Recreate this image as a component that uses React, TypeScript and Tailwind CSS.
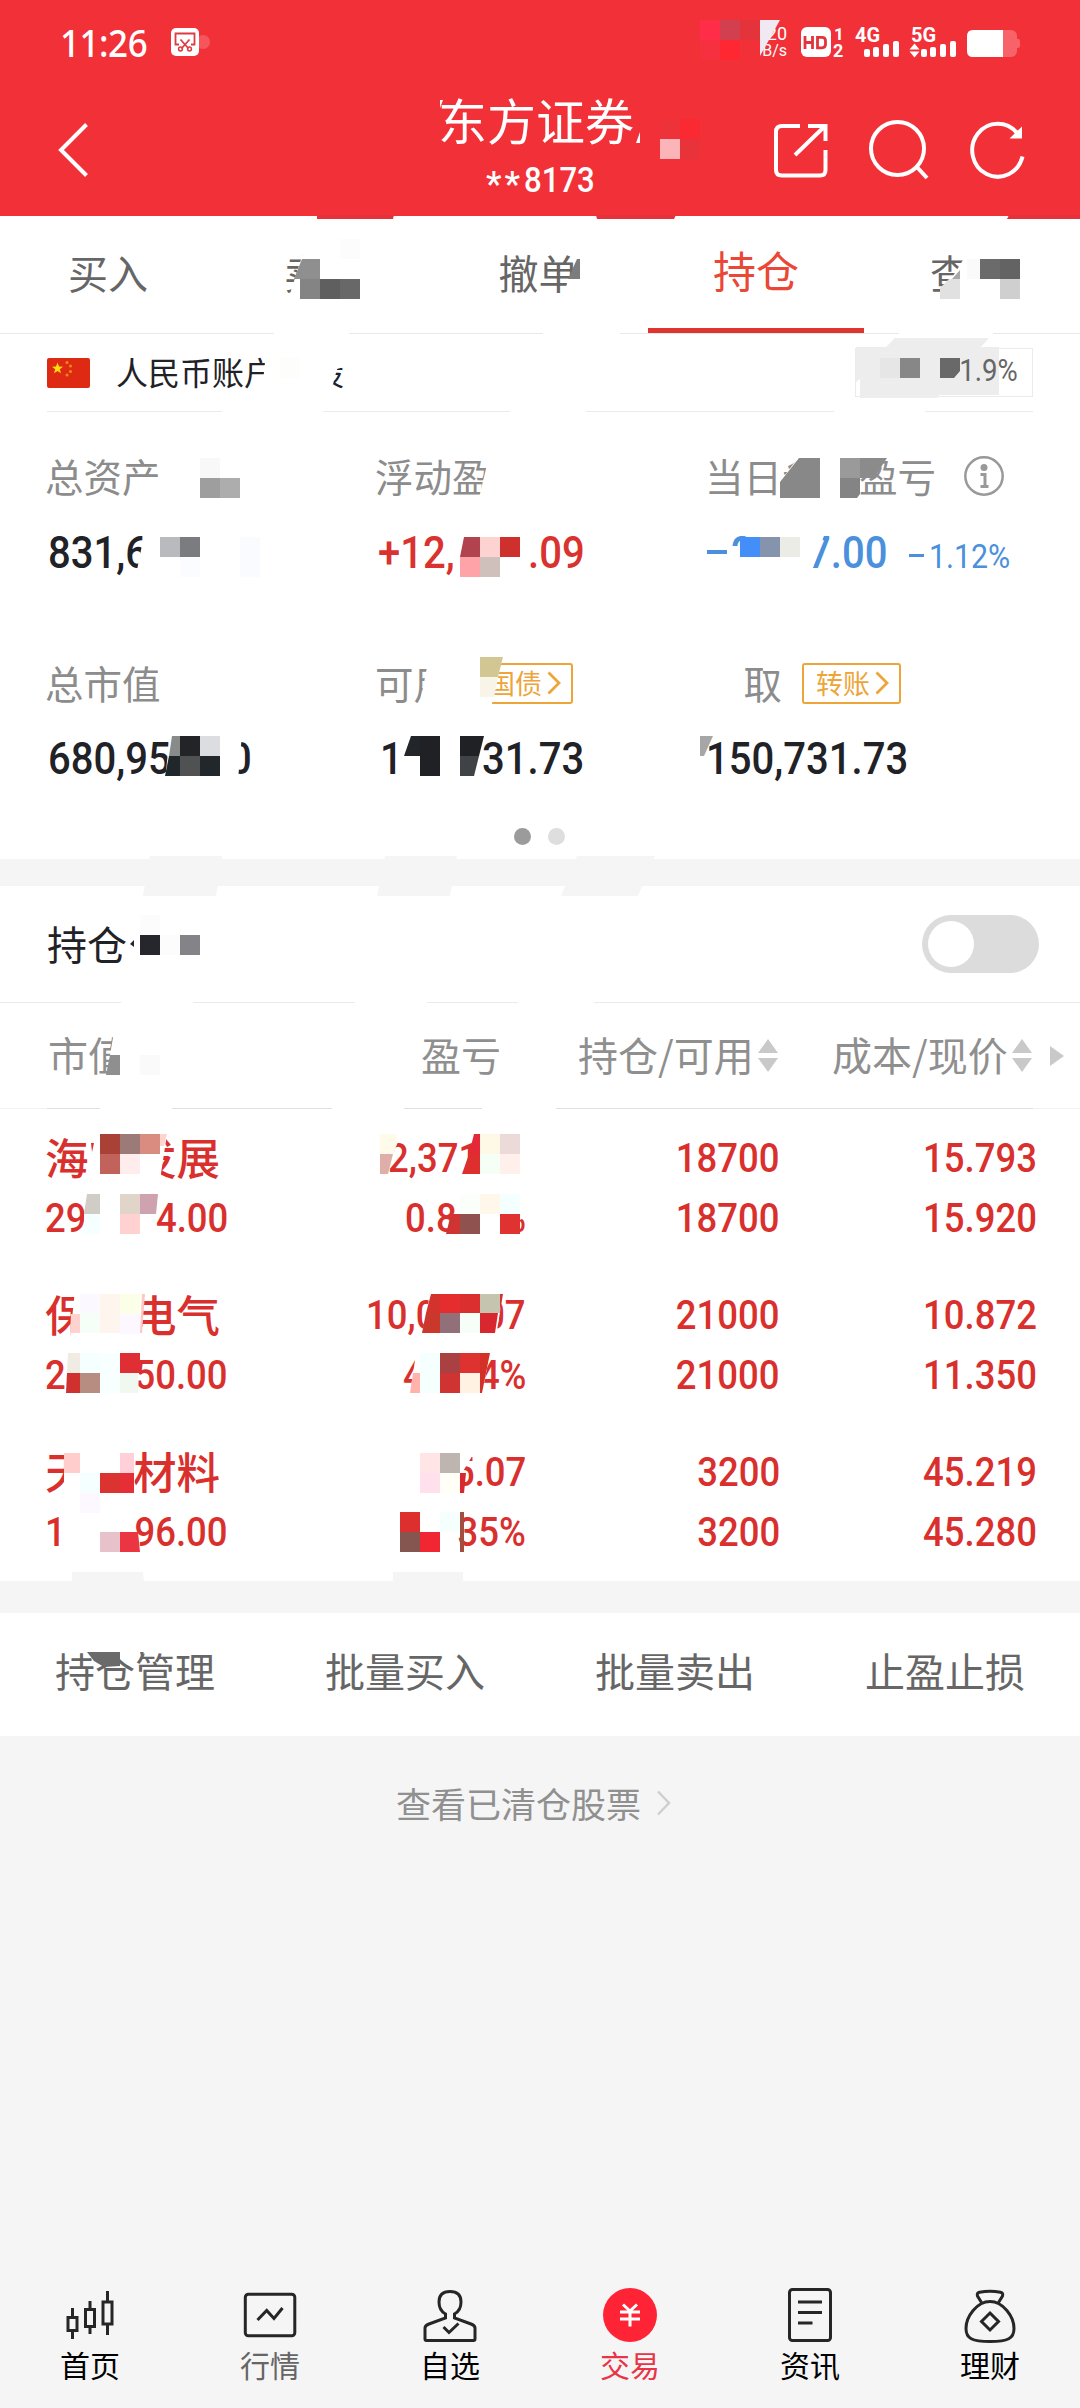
import type { ReactNode } from 'react';
import clsx from 'clsx';

type Shape = [points: string, fill: string];
type Block = [x: number, y: number, w: number, h: number, fill: string];

const tabs = ['买入', '卖', '撤单', '持仓', '查'];
const actions = ['持仓管理', '批量买入', '批量卖出', '止盈止损'];

const holdings = [
  { name: ['海', '发展'], value: ['29', '4.00'], profit: ['2,371', ''], rate: ['0.8', '%'], volume: '18700', cost: '15.793', price: '15.920' },
  { name: ['保', '电气'], value: ['2', '50.00'], profit: ['10,0', '07'], rate: ['4', '4%'], volume: '21000', cost: '10.872', price: '11.350' },
  { name: ['天', '材料'], value: ['1', '96.00'], profit: ['', '5.07'], rate: ['', '35%'], volume: '3200', cost: '45.219', price: '45.280' },
];

// widths of the partly hidden profit / rate texts, right aligned to the column
const profitWidths = ['w-[138px]', 'w-[160px]', 'w-[159px]'];
const rateWidths = ['w-[121px]', 'w-[123px]', 'w-[123px]'];

// white covers that hide parts of the private texts
const covers: Shape[] = [
  ['304,250 370,250 370,300 288,300', '#fff'],
  ['568,279 582,279 582,300 563,300', '#fff'],
  ['968,252 1050,252 1050,300 938,300', '#fff'],
  ['274,332 349,332 349,336 274,336', '#fff'],
  ['543,332 620,332 620,336 543,336', '#fff'],
  ['899,332 993,332 993,336 899,336', '#fff'],
  ['222,409 323,409 323,413 222,413', '#fff'],
  ['510,409 586,409 586,413 510,413', '#fff'],
  ['834,409 925,409 925,413 834,413', '#fff'],
  ['266,352 290,352 290,392 262,392', '#fff'],
  ['308,352 344,352 344,367 337,369 331,392 308,392', '#fff'],
  ['490,452 500,452 500,502 478,502', '#fff'],
  ['799,456 840,456 840,500 780,500 780,482', '#fff'],
  ['145,530 160,530 160,575 136,575', '#fff'],
  ['748,530 770,530 770,575 728,575 728,557 740,555', '#fff'],
  ['805,530 826,530 811,573 805,573', '#fff'],
  ['428,662 450,662 450,708 419,708', '#fff'],
  ['455,660 502,660 491,708 455,708', '#fff'],
  ['700,662 745,662 741,706 700,706', '#fff'],
  ['170,734 242,734 238,780 165,780', '#fff'],
  ['114,1032 132,1032 132,1078 106,1078', '#fff'],
  ['121,1001 193,1001 193,1004 121,1004', '#fff'],
  ['355,1001 427,1001 427,1004 355,1004', '#fff'],
  ['518,1001 594,1001 594,1004 518,1004', '#fff'],
  ['100,1107 172,1107 172,1110 100,1110', '#fff'],
  ['332,1107 404,1107 404,1110 332,1110', '#fff'],
  ['482,1107 556,1107 556,1110 482,1110', '#fff'],
  ['92,1134 167,1134 160,1180 90,1180', '#fff'],
  ['87,1194 158,1194 153,1238 84,1238', '#fff'],
  ['502,1194 530,1194 530,1214 520,1220 520,1238 502,1238', '#fff'],
  ['75,1290 145,1290 140,1338 70,1338', '#fff'],
  ['67,1350 140,1350 138,1394 65,1394', '#fff'],
  ['430,1294 503,1294 496,1336 422,1336', '#fff'],
  ['416,1353 490,1353 482,1394 410,1394', '#fff'],
  ['64,1448 136,1448 134,1496 64,1496', '#fff'],
  ['440,1453 474,1453 462,1473 460,1493 440,1493', '#fff'],
];

const patches: Shape[] = [
  // header edge
  ['317,215 394,215 393,219 317,219', '#e5323a'],
  ['596,215 676,215 674,219 597,219', '#e5323a'],
  ['1009,215 1080,215 1080,219 1007,219', '#e5323a'],
  // separator bands
  ['150,856 222,856 222,859 216,896 143,896', '#f5f5f5'],
  ['385,856 457,856 450,896 377,896', '#f5f5f5'],
  ['577,856 655,856 638,896 561,896', '#f5f5f5'],
  ['72,1572 143,1572 144,1582 72,1582', '#f5f5f5'],
  ['393,1572 463,1572 463,1582 393,1582', '#f5f5f5'],
  // status bar and title
  ['760,20 780,20 760,56', '#f1e9f2'],
  ['440,100 443,100 440,108', '#fff'],
  ['640,132 640,143 636,143', '#fff'],
  // tabs
  ['302,259 320,259 320,279 294,279', '#8f8f8f'],
  ['577,259 580,259 580,279 568,279', '#7c7c7c'],
  ['960,270 960,279 952,279', '#a8a8a8'],
  ['940,288 949,279 960,279 960,299 940,299', '#e1e1e1'],
  // account ratio badge
  ['856,347 886,347 895,338 989,338 981,347 999,347 999,395 939,395 937,398 860,398 860,379 856,382', '#ededed'],
  ['940,358 960,358 960,371 954,378 940,378', '#696969'],
  // assets
  ['799,458 820,458 820,498 780,498 780,482', '#888888'],
  ['860,458 887,458 874,478 860,478', '#8b8b8b'],
  ['840,478 860,478 860,494 857,498 840,498', '#848484'],
  ['464,537 480,537 480,557 460,557', '#b0434d'],
  ['480,657 503,657 498,677 480,677', '#d2c692'],
  ['480,677 498,677 494,697 480,697', '#f8f5e8'],
  ['172,736 180,736 180,756 169,756', '#888b89'],
  ['169,756 180,756 180,776 165,776', '#1f272b'],
  ['411,736 420,736 420,756 404,756', '#22262b'],
  ['460,736 484,736 479,756 460,756', '#1f2124'],
  ['460,756 479,756 474,776 460,776', '#3f4345'],
  ['700,736 713,736 704,756 700,756', '#a6a6a6'],
  // holdings
  ['134,940 130,944 134,947', '#26272d'],
  ['110,1055 120,1055 120,1075 106,1075', '#8f8f8f'],
  ['160,1134 167,1134 164,1146 160,1146', '#fdd5ce'],
  ['91,1143 94,1143 92,1152', '#d9302e'],
  ['87,1194 100,1194 100,1214 84,1214', '#cfcdc5'],
  ['140,1194 158,1194 156,1214 140,1214', '#cfa2b0'],
  ['380,1134 396,1134 398,1142 393,1154 380,1154', '#fffbeb'],
  ['380,1154 393,1154 388,1174 380,1174', '#e0aea8'],
  ['474,1134 480,1134 480,1154 469,1154', '#e42837'],
  ['469,1154 480,1154 480,1174 462,1174', '#dd302e'],
  ['451,1214 460,1214 460,1234 446,1234', '#cf3432'],
  ['142,1294 145,1294 142,1333 140,1333', '#fdc8c2'],
  ['71,1314 80,1314 80,1333 70,1333', '#fdd2cf'],
  ['68,1353 80,1353 80,1373 67,1373', '#f0ece4'],
  ['67,1373 80,1373 80,1393 66,1393', '#cf322e'],
  ['431,1294 440,1294 440,1313 426,1313', '#d4322c'],
  ['426,1313 440,1313 440,1333 422,1333', '#ca382c'],
  ['500,1294 503,1294 500,1312', '#d4322c'],
  ['480,1313 498,1313 495,1333 480,1333', '#d9272f'],
  ['480,1353 490,1353 482,1393 480,1393', '#d33028'],
  ['413,1373 420,1373 420,1393 410,1393', '#ffb3ab'],
  ['460,1473 466,1473 464,1493 460,1493', '#d9272f'],
  ['120,1532 138,1532 140,1552 120,1552', '#eb3542'],
  ['87,1652 120,1652 120,1666 104,1667 94,1661', '#6a6a6a'],
  ['140,1652 144,1652 141,1656', '#6a6a6a'],
];

const blocks: Block[] = [
  [700, 20, 20, 20, '#ff2d48'], [720, 20, 20, 20, '#d24050'], [740, 20, 20, 20, '#e5333b'],
  [700, 40, 20, 20, '#f73040'], [720, 40, 20, 20, '#ff2832'],
  [660, 119, 20, 20, '#ee323a'], [680, 119, 20, 20, '#fb2a32'], [660, 139, 20, 20, '#fbb4b8'], [680, 139, 20, 20, '#e8333b'],
  [340, 239, 20, 20, '#fcfcfc'], [300, 279, 20, 20, '#848484'], [320, 279, 20, 20, '#5f5f5f'], [340, 279, 20, 20, '#686868'],
  [967, 259, 13, 20, '#fafafa'], [980, 259, 20, 20, '#6b6b6b'], [1000, 259, 20, 20, '#636363'], [1000, 279, 20, 20, '#cfcfcf'],
  [280, 358, 20, 20, '#fdfdfc'], [880, 358, 20, 20, '#e6e6e6'], [900, 358, 20, 20, '#878787'],
  [200, 458, 20, 20, '#f8f8f8'], [200, 478, 20, 20, '#9e9e9e'], [220, 478, 20, 20, '#adadad'], [840, 458, 20, 20, '#9a9a9a'],
  [160, 537, 20, 20, '#b8babd'], [180, 537, 20, 20, '#7b7c80'], [180, 557, 20, 20, '#fbfcff'], [240, 537, 20, 40, '#fafbff'],
  [480, 537, 20, 20, '#fdd3d2'], [500, 537, 20, 20, '#ce302e'], [460, 557, 20, 20, '#fea4a8'], [480, 557, 20, 20, '#cfc0bc'],
  [740, 537, 20, 20, '#438ef8'], [760, 537, 20, 20, '#8594ac'], [780, 537, 20, 20, '#ecece6'],
  [180, 736, 20, 20, '#222428'], [200, 736, 20, 20, '#dcdde0'], [180, 756, 20, 20, '#505153'], [200, 756, 20, 20, '#22272b'],
  [420, 736, 20, 40, '#1f2124'],
  [140, 915, 20, 20, '#fcfcfc'], [140, 935, 20, 20, '#26272d'], [160, 935, 20, 20, '#fcfcfc'], [180, 935, 20, 20, '#848387'],
  [140, 1055, 20, 20, '#fafafa'],
  [100, 1134, 20, 20, '#aa4137'], [120, 1134, 20, 20, '#9b7a78'], [140, 1134, 20, 20, '#d98c7f'],
  [100, 1154, 20, 20, '#c1635b'], [120, 1154, 20, 20, '#ffecec'],
  [120, 1194, 20, 20, '#e1d4c8'], [84, 1214, 16, 20, '#f5ffff'], [120, 1214, 20, 20, '#ffd2d1'],
  [480, 1134, 20, 20, '#fef9e6'], [500, 1134, 20, 20, '#ecdad8'], [480, 1154, 20, 20, '#f5fff5'], [500, 1154, 20, 20, '#fff0eb'],
  [460, 1194, 20, 20, '#fbfffa'], [480, 1194, 20, 20, '#fff8ea'], [500, 1194, 20, 20, '#f4ffff'],
  [460, 1214, 20, 20, '#90524e'], [500, 1214, 20, 20, '#e03230'],
  [80, 1294, 20, 19, '#fcf8ff'], [100, 1294, 20, 39, '#fff5ef'], [120, 1294, 20, 20, '#fbffe8'], [80, 1313, 20, 20, '#f5fff8'], [120, 1314, 20, 20, '#fdf8ff'],
  [80, 1353, 20, 20, '#f5ffff'], [120, 1353, 20, 20, '#df2f35'], [80, 1373, 20, 20, '#b68d80'], [100, 1353, 20, 40, '#f7ffff'], [120, 1373, 18, 20, '#f0f8f0'],
  [440, 1294, 20, 19, '#e52d2f'], [460, 1294, 20, 19, '#db2e2e'], [480, 1294, 20, 19, '#c5c4af'], [440, 1313, 20, 20, '#917079'], [460, 1313, 20, 20, '#f5fff8'],
  [420, 1353, 20, 40, '#f5fffd'], [440, 1353, 20, 20, '#a94042'], [460, 1353, 20, 20, '#de3231'], [440, 1373, 20, 20, '#d03432'], [460, 1373, 20, 20, '#fff2e2'],
  [64, 1453, 16, 20, '#ffcdcb'], [120, 1453, 14, 20, '#ffd0d8'], [100, 1473, 20, 20, '#da3330'], [120, 1473, 14, 20, '#e62e36'], [80, 1473, 20, 20, '#f5ffff'], [80, 1493, 20, 20, '#fdf8ff'],
  [100, 1532, 20, 20, '#e7c2cb'],
  [420, 1453, 20, 20, '#ffe5e5'], [440, 1453, 20, 20, '#beb4b0'], [420, 1473, 20, 20, '#ffe0ec'], [440, 1473, 20, 20, '#fffff8'],
  [400, 1512, 20, 20, '#dd2f2e'], [400, 1532, 20, 20, '#85554f'], [420, 1532, 20, 20, '#f02633'], [440, 1512, 20, 20, '#f5fffd'], [460, 1512, 4, 40, '#a34c40'],
];

function PrivacyMosaic() {
  return (
    <svg className="absolute inset-0 z-10 pointer-events-none" width="1080" height="2408" viewBox="0 0 1080 2408">
      {covers.map(([points, fill]) => <polygon key={points} points={points} fill={fill} />)}
      {patches.map(([points, fill]) => <polygon key={points} points={points} fill={fill} />)}
      {blocks.map(([x, y, w, h, fill]) => (
        <rect key={`${x}-${y}`} x={x} y={y} width={w} height={h} fill={fill} shapeRendering="crispEdges" />
      ))}
    </svg>
  );
}

// Narrow digits
function Num({ children, right, className }: { children: ReactNode; right?: boolean; className?: string }) {
  return (
    <span className={clsx('inline-block scale-x-89 whitespace-pre', right ? 'origin-right' : 'origin-left', className)}>
      {children}
    </span>
  );
}

function StatusBar() {
  return (
    <div className="flex h-[84px] items-center text-white">
      <span className="ml-[60px] w-[111px] text-[38px] leading-none font-['Noto_Sans'] font-medium tracking-[-0.5px] scale-x-92 origin-left">11:26</span>
      <svg width="40" height="28" viewBox="0 0 40 28">
        <circle cx="32" cy="14" r="7" fill="#f5555b" />
        <rect width="28" height="28" rx="5" fill="#fff" />
        <path d="M8 16.5H4.500V5.500h19v11H20M9.500 11.500l8 9M18.500 11.500l-8 9" fill="none" stroke="#dc3c42" strokeWidth="1.800" />
        <circle cx="9.500" cy="21" r="1.900" fill="none" stroke="#dc3c42" strokeWidth="1.500" />
        <circle cx="18.500" cy="21" r="1.900" fill="none" stroke="#dc3c42" strokeWidth="1.500" />
      </svg>
      <div className="ml-[549px] w-[27px] flex flex-col items-end font-[Roboto] text-[18px] leading-[18px]">
        <span>20</span>
        <span className="text-[16px] leading-[16px]">B/s</span>
      </div>
      <svg className="ml-[14px]" width="220" height="60" viewBox="801 12 220 60" fontFamily="Roboto" fill="#fff">
        <rect x="801" y="27" width="30" height="30" rx="6" />
        <path d="M805 36v13M812.500 36v13M805 42.500h7.500M817.500 37.300h4.500q3.500 0 3.500 3.500v3.500q0 3.500-3.500 3.500h-4.500z" fill="none" stroke="#e0353b" strokeWidth="2.800" />
        <text x="834" y="40" fontSize="17" fontWeight="700">1</text>
        <text x="833" y="57" fontSize="18" fontWeight="700">2</text>
        <text x="855" y="42" fontSize="20" fontWeight="700">4G</text>
        <text x="911" y="42" fontSize="20" fontWeight="700">5G</text>
        {[864, 873, 883, 893].map((x, i) => <rect key={x} x={x} y={[49, 47, 44, 41][i]} width="6" height={[8, 10, 13, 16][i]} rx="2" />)}
        {[921, 930, 940, 950].map((x, i) => <rect key={x} x={x} y={[49, 47, 44, 41][i]} width="6" height={[8, 10, 13, 16][i]} rx="2" />)}
        <path d="M914.500 43.500l5 6h-10zM914.500 57.500l5-6h-10z" />
        <rect x="967" y="30" width="50" height="27" rx="6" fill="#f8636a" />
        <rect x="1015" y="39" width="5" height="9" rx="2" fill="#f8636a" />
        <path d="M1003 30h-30q-6 0-6 6v15q0 6 6 6h30z" />
      </svg>
    </div>
  );
}

function Header() {
  return (
    <header className="h-[216px] bg-[#f23037] text-white">
      <StatusBar />
      <div className="flex h-[132px] items-start">
        <svg className="mt-[38px] ml-[56px]" width="34" height="56" viewBox="0 0 34 56" fill="none" stroke="#fff" strokeWidth="4">
          <path d="M30.500 2.500L5 28l25.500 25.500" />
        </svg>
        <div className="ml-[348px] flex w-[199px] flex-col">
          <h1 className="mt-[5px] text-[49px] leading-[60px] whitespace-nowrap">东方证券</h1>
          <div className="mt-[13px] ml-[48px] flex h-[36px] items-center font-[Roboto] text-[35px] leading-none font-medium">
            <span className="mt-[8px] w-[38px] tracking-[3px]">**</span>
            <Num>8173</Num>
          </div>
        </div>
        <svg className="mt-[34px] ml-[130px]" width="270" height="66" viewBox="767 118 270 66" fill="none" stroke="#fff" strokeWidth="4">
          <path d="M800 126h-18q-6 0-6 6v38q0 5.500 6 5.500h38q5.500 0 5.500-5.500v-20M808 126h17.500v15M795 155l29-28" />
          <circle cx="897.500" cy="148.500" r="26.500" />
          <path d="M916 166l11 12" />
          <path d="M1022.500 156.500a25.500 26.500 0 1 1-5-23" />
          <path d="M1022 126.500v12h-12.500z" fill="#fff" stroke="none" />
        </svg>
      </div>
    </header>
  );
}

function TabBar() {
  return (
    <nav className="grid h-[118px] grid-cols-5 border-b border-[#e9e9e9] text-[40px] text-[#666]">
      {tabs.map((tab) => (
        <div
          key={tab}
          className={clsx('flex flex-col items-center justify-between leading-[58px]', {
            'pt-[24px] text-[43px] text-[#ea4736]': tab === '持仓',
            'pt-[27px]': tab !== '持仓',
            'pr-[40px]': tab === '卖',
            'pr-[44px]': tab === '查',
            'pr-[3px]': tab === '撤单',
          })}
        >
          <span>{tab}</span>
          {tab === '持仓' && <span className="h-[5px] w-full bg-[#df3430]" />}
        </div>
      ))}
    </nav>
  );
}

function ChinaFlag() {
  return (
    <svg width="43" height="30" viewBox="0 0 43 30">
      <rect width="43" height="30" rx="2" fill="#de2a12" />
      <path d="M10.500 4.500l1.500 4 4 .2-3.200 2.500 1.200 4-3.500-2.300-3.500 2.300 1.200-4L5 8.700l4-.2z" fill="#fddc10" />
      <g fill="#f08a1c">
        <circle cx="20" cy="4.500" r="1.500" />
        <circle cx="23.500" cy="8" r="1.500" />
        <circle cx="23.500" cy="13.500" r="1.500" />
        <circle cx="20" cy="17" r="1.500" />
      </g>
    </svg>
  );
}

function LinkTag({ children }: { children: ReactNode }) {
  return (
    <span className="mt-[2px] flex h-[41px] w-[99px] items-center rounded-[3px] border-[2.500px] border-[#eda53a] pb-[2px] pl-[12px] text-[27px] leading-none text-[#eda53a]">
      {children}
      <svg className="mt-[2px] ml-[5px]" width="14" height="24" viewBox="0 0 14 24" fill="none" stroke="#eda53a" strokeWidth="2.800">
        <path d="M1.500 1.500L12 12 1.500 22.500" />
      </svg>
    </span>
  );
}

function Assets() {
  const label = 'flex h-[50px] items-center text-[38.500px] leading-none text-[#8c8c8c] whitespace-nowrap';
  const value = 'flex h-[50px] items-center font-[Roboto] text-[45px] leading-none font-medium';
  return (
    <section className="h-[448px] bg-white">
      <div className="mx-[47px] flex h-[78px] items-center justify-between border-b border-[#ebebeb]">
        <div className="flex items-center text-[32px] leading-none text-[#1f2227]">
          <ChinaFlag />
          <span className="mb-[4px] ml-[26px]">人民币账户</span>
          <span className="mb-[4px] ml-[36px]">股</span>
        </div>
        <div className="flex h-[49px] w-[178px] items-center justify-end border border-[#ebebeb] pr-[14px] pb-[2px] font-[Roboto] text-[31px] text-[#666]">
          <Num right className="relative z-20">1.9%</Num>
        </div>
      </div>
      <div className="mt-[38px] ml-[45px] grid grid-cols-[330px_330px_1fr]">
        <div className={label}>总资产</div>
        <div className={label}>浮动盈</div>
        <div className={label}>
          当日参考盈亏
          <svg className="mt-[2px] ml-[27px]" width="42" height="42" viewBox="0 0 42 42" fill="none" stroke="#999" strokeWidth="2.500">
            <circle cx="21" cy="21" r="18.700" />
            <circle cx="21" cy="12.500" r="3.500" fill="#999" stroke="none" />
            <path d="M17.500 19.500H22V31M17.500 31.500h8" strokeWidth="3" />
          </svg>
        </div>
      </div>
      <div className="mt-[27px] ml-[48px] grid grid-cols-[330px_329px_1fr]">
        <div className={clsx(value, 'text-[#1f2227]')}><Num>831,6</Num></div>
        <div className={clsx(value, 'text-[#d9322f]')}>
          <Num className="w-[150px]">+12,</Num>
          <Num>.09</Num>
        </div>
        <div className={clsx(value, 'text-[#4a90dc]')}>
          <span className="mr-[4px] h-[4px] w-[20px] bg-current" />
          <Num className="w-[77px]">2</Num>
          <Num className="w-[101px]">7.00</Num>
          <span className="mt-[6px] mr-[5px] h-[3px] w-[15px] bg-current" />
          <Num className="mt-[7px] text-[34px] font-normal">1.12%</Num>
        </div>
      </div>
      <div className="mt-[80px] ml-[45px] grid grid-cols-[330px_330px_1fr]">
        <div className={label}>总市值</div>
        <div className={label}>可用<span className="ml-[22px]"><LinkTag>国债</LinkTag></span></div>
        <div className={label}>可取<span className="ml-[20px]"><LinkTag>转账</LinkTag></span></div>
      </div>
      <div className={clsx(value, 'mt-[26px] ml-[48px] text-[#1f2227]')}>
        <Num className="w-[181px]">680,95</Num>
        <Num className="w-[151px]">0</Num>
        <Num className="w-[102px]">1</Num>
        <Num className="w-[224px]">31.73</Num>
        <Num>150,731.73</Num>
      </div>
      <div className="mt-[45px] flex justify-center gap-[17px] pr-px">
        <span className="size-[17px] rounded-full bg-[#9b9b9b]" />
        <span className="size-[17px] rounded-full bg-[#dedede]" />
      </div>
    </section>
  );
}

function SortArrows() {
  return (
    <svg className="mt-[3px] ml-[4px]" width="20" height="33" viewBox="0 0 20 33" fill="#c9c9c9">
      <path d="M10 0l10 14H0zM10 33l10-14H0z" />
    </svg>
  );
}

function HoldingsTable() {
  return (
    <section className="bg-white">
      <div className="flex h-[117px] items-center justify-between border-b border-[#ebebeb] pr-[41px] pl-[47px]">
        <span className="mb-[3px] text-[40px] leading-none text-[#1f2227]">持仓</span>
        <span className="flex h-[58px] w-[117px] items-center rounded-full bg-[#dcdcdc] pl-[6px]">
          <span className="size-[46px] rounded-full bg-white" />
        </span>
      </div>
      <div className="flex h-[105px] items-center pb-[3px] text-[40px] leading-none whitespace-nowrap text-[#8f8f8f]">
        <span className="ml-[48px] w-[373px]">市值</span>
        <span className="w-[157px]">盈亏</span>
        <span className="flex w-[254px] items-center">持仓/可用<SortArrows /></span>
        <span className="flex items-center">成本/现价<SortArrows /></span>
        <svg className="mt-[3px] ml-[18px]" width="14" height="20" viewBox="0 0 14 20" fill="#c9c9c9"><path d="M0 0l14 10L0 20z" /></svg>
      </div>
      <div className="bg-[#f2f2f2] px-[47px]">
        <div className="h-px bg-[#dfdfdf]" />
      </div>
      <div className="h-[472px] pt-[19px] font-[Roboto] text-[41px] font-medium text-[#d9302e]">
        {holdings.map((row, i) => (
          <div key={row.volume} className="mb-[37px] ml-[45px] flex leading-[60px]">
            <div className="w-[183px]">
              <div className="flex h-[60px] w-[175px] justify-between font-['Noto_Sans_CJK_SC'] text-[43.500px] leading-[57px]">
                <span>{row.name[0]}</span>
                <span>{row.name[1]}</span>
              </div>
              <div className="flex justify-between">
                <Num>{row.value[0]}</Num>
                <Num right>{row.value[1]}</Num>
              </div>
            </div>
            <div className="flex w-[298px] flex-col items-end">
              <div className={clsx('flex h-[60px] justify-between', profitWidths[i])}>
                <Num>{row.profit[0]}</Num>
                <Num right>{row.profit[1]}</Num>
              </div>
              <div className={clsx('flex h-[60px] justify-between', rateWidths[i])}>
                <Num>{row.rate[0]}</Num>
                <Num right>{row.rate[1]}</Num>
              </div>
            </div>
            <div className="flex w-[254px] flex-col items-end">
              <Num right>{row.volume}</Num>
              <Num right>{row.volume}</Num>
            </div>
            <div className="flex w-[257px] flex-col items-end">
              <Num right>{row.cost}</Num>
              <Num right>{row.price}</Num>
            </div>
          </div>
        ))}
      </div>
    </section>
  );
}

const navItems = [
  {
    label: '首页',
    color: 'text-black',
    icon: (
      <path d="M8 31.500h9v13H8zM12.500 22v9M12.500 45v8M25.500 23.500h9v17h-9zM30 15v8M30 41v7M43 16h9v22h-9zM47.500 5v11M47.500 38v11" />
    ),
  },
  {
    label: '行情',
    color: 'text-[#666]',
    icon: (
      <>
        <rect x="5.300" y="8.300" width="49.500" height="41.500" rx="3" />
        <path d="M17.500 34l9.200-9.500 7.300 8L42.500 22" />
      </>
    ),
  },
  {
    label: '自选',
    color: 'text-black',
    icon: (
      <>
        <path d="M25.500 28v4L9 38q-4 1.500-4 4v11q0 1.500 1.500 1.500h47q1.500 0 1.500-1.500V42q0-2.500-4-4l-16.500-6v-4q6.500-3.500 6.500-12 0-10.500-11-10.500T19 16q0 8.500 6.500 12z" />
        <path d="M23.500 41l5.500 5.500 9.500-9" />
      </>
    ),
  },
  {
    label: '交易',
    color: 'text-[#e93347]',
    icon: (
      <>
        <circle cx="30" cy="29" r="27" fill="#fe2435" stroke="none" />
        <path d="M23 18.500l7 6.500 7-6.500M20 26h20M20 33h20M30 25v15.500" stroke="#fff" />
      </>
    ),
  },
  {
    label: '资讯',
    color: 'text-black',
    icon: (
      <>
        <rect x="9.500" y="3.500" width="41" height="51" rx="3" />
        <path d="M18 16h24M18 26.500h24M18 37h14.500" />
      </>
    ),
  },
  {
    label: '理财',
    color: 'text-black',
    icon: (
      <>
        <path d="M21.500 16.500L17.500 10q-1-3 2-3.800 10.500-2 21 0 3 .8 2 3.800l-4 6.500" />
        <path d="M30 15.500c13 0 24 15 24 27 0 10-6 13-24 13S6 52.500 6 42.500c0-12 11-27 24-27z" />
        <path d="M30 27l8.500 8.500L30 44l-8.500-8.500z" />
      </>
    ),
  },
];

export default function App() {
  return (
    <div className="relative flex h-[2408px] w-[1080px] flex-col overflow-hidden bg-[#f5f5f5] font-['Noto_Sans_CJK_SC',sans-serif]">
      <Header />
      <main className="flex-1">
        <div className="bg-white">
          <TabBar />
        </div>
        <div className="h-[525px] bg-white">
          <Assets />
        </div>
        <div className="mt-[27px]">
          <HoldingsTable />
        </div>
        <div className="mt-[32px] grid h-[123px] grid-cols-4 items-center bg-white pb-[9px] text-center text-[40px] leading-none text-[#666]">
          {actions.map((action) => <span key={action}>{action}</span>)}
        </div>
        <div className="mt-[48px] flex h-[36px] items-center justify-center pr-[13px] text-[35px] leading-none text-[#909090]">
          查看已清仓股票
          <svg className="mt-[2px] ml-[15px]" width="15" height="26" viewBox="0 0 15 26" fill="none" stroke="#cfcfcf" strokeWidth="2.500">
            <path d="M2 1.500L13 13 2 24.500" />
          </svg>
        </div>
      </main>
      <footer className="grid h-[122px] grid-cols-6">
        {navItems.map((item) => (
          <div key={item.label} className={clsx('flex flex-col items-center', item.color)}>
            <svg width="60" height="60" viewBox="0 0 60 60" fill="none" stroke="#262626" strokeWidth="3">
              {item.icon}
            </svg>
            <span className="mt-[3px] text-[30px] leading-[30px]">{item.label}</span>
          </div>
        ))}
      </footer>
      <PrivacyMosaic />
    </div>
  );
}
